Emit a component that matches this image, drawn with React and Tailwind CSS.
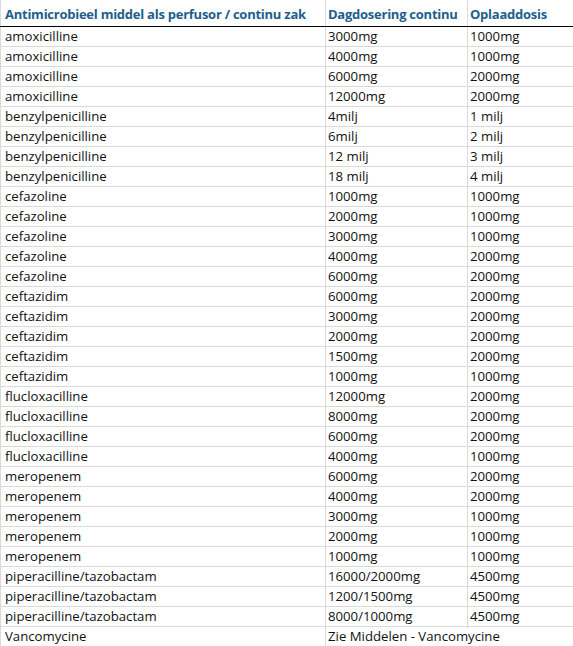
import React from 'react';

const rows = [
  ['amoxicilline', '3000mg', '1000mg'],
  ['amoxicilline', '4000mg', '1000mg'],
  ['amoxicilline', '6000mg', '2000mg'],
  ['amoxicilline', '12000mg', '2000mg'],
  ['benzylpenicilline', '4milj', '1 milj'],
  ['benzylpenicilline', '6milj', '2 milj'],
  ['benzylpenicilline', '12 milj', '3 milj'],
  ['benzylpenicilline', '18 milj', '4 milj'],
  ['cefazoline', '1000mg', '1000mg'],
  ['cefazoline', '2000mg', '1000mg'],
  ['cefazoline', '3000mg', '1000mg'],
  ['cefazoline', '4000mg', '2000mg'],
  ['cefazoline', '6000mg', '2000mg'],
  ['ceftazidim', '6000mg', '2000mg'],
  ['ceftazidim', '3000mg', '2000mg'],
  ['ceftazidim', '2000mg', '2000mg'],
  ['ceftazidim', '1500mg', '2000mg'],
  ['ceftazidim', '1000mg', '1000mg'],
  ['flucloxacilline', '12000mg', '2000mg'],
  ['flucloxacilline', '8000mg', '2000mg'],
  ['flucloxacilline', '6000mg', '2000mg'],
  ['flucloxacilline', '4000mg', '1000mg'],
  ['meropenem', '6000mg', '2000mg'],
  ['meropenem', '4000mg', '2000mg'],
  ['meropenem', '3000mg', '1000mg'],
  ['meropenem', '2000mg', '1000mg'],
  ['meropenem', '1000mg', '1000mg'],
  ['piperacilline/tazobactam', '16000/2000mg', '4500mg'],
  ['piperacilline/tazobactam', '1200/1500mg', '4500mg'],
  ['piperacilline/tazobactam', '8000/1000mg', '4500mg'],
];

const App = () => {
  return (
    <div className="w-[573px] h-[646px] overflow-hidden bg-white text-[13.2px] text-[#111] font-['Open_Sans',sans-serif]">
      <div className="grid grid-cols-[325px_142px_1fr] h-[27px] border-b-[1.5px] border-black text-[#215e8c] font-bold text-[13px] tracking-[-0.25px]">
        <div className="flex items-end pl-[4px] pb-[2px] border-l border-[#dadada] whitespace-nowrap overflow-hidden">
          Antimicrobieel middel als perfusor / continu zak
        </div>
        <div className="flex items-end pl-[2px] pb-[2px] border-l border-[#dadada] whitespace-nowrap overflow-hidden">
          Dagdosering continu
        </div>
        <div className="flex items-end pl-[2px] pb-[2px] border-l border-[#dadada] whitespace-nowrap">
          Oplaaddosis
        </div>
      </div>
      {rows.map((r, i) => (
        <div key={i} className="grid grid-cols-[325px_142px_1fr] h-[20px] border-b border-[#dadada]">
          <div className="flex items-end pl-[4px] pb-[1px] border-l border-[#dadada] whitespace-nowrap">{r[0]}</div>
          <div className="flex items-end pl-[2px] pb-[1px] border-l border-[#dadada] whitespace-nowrap">{r[1]}</div>
          <div className="flex items-end pl-[2px] pb-[1px] border-l border-[#dadada] whitespace-nowrap">{r[2]}</div>
        </div>
      ))}
      <div className="grid grid-cols-[325px_1fr] h-[20px] border-b border-[#dadada]">
        <div className="flex items-end pl-[4px] pb-[1px] border-l border-[#dadada] whitespace-nowrap">Vancomycine</div>
        <div className="flex items-end pl-[2px] pb-[1px] border-l border-[#dadada] whitespace-nowrap">Zie Middelen - Vancomycine</div>
      </div>
    </div>
  );
};

export default App;
